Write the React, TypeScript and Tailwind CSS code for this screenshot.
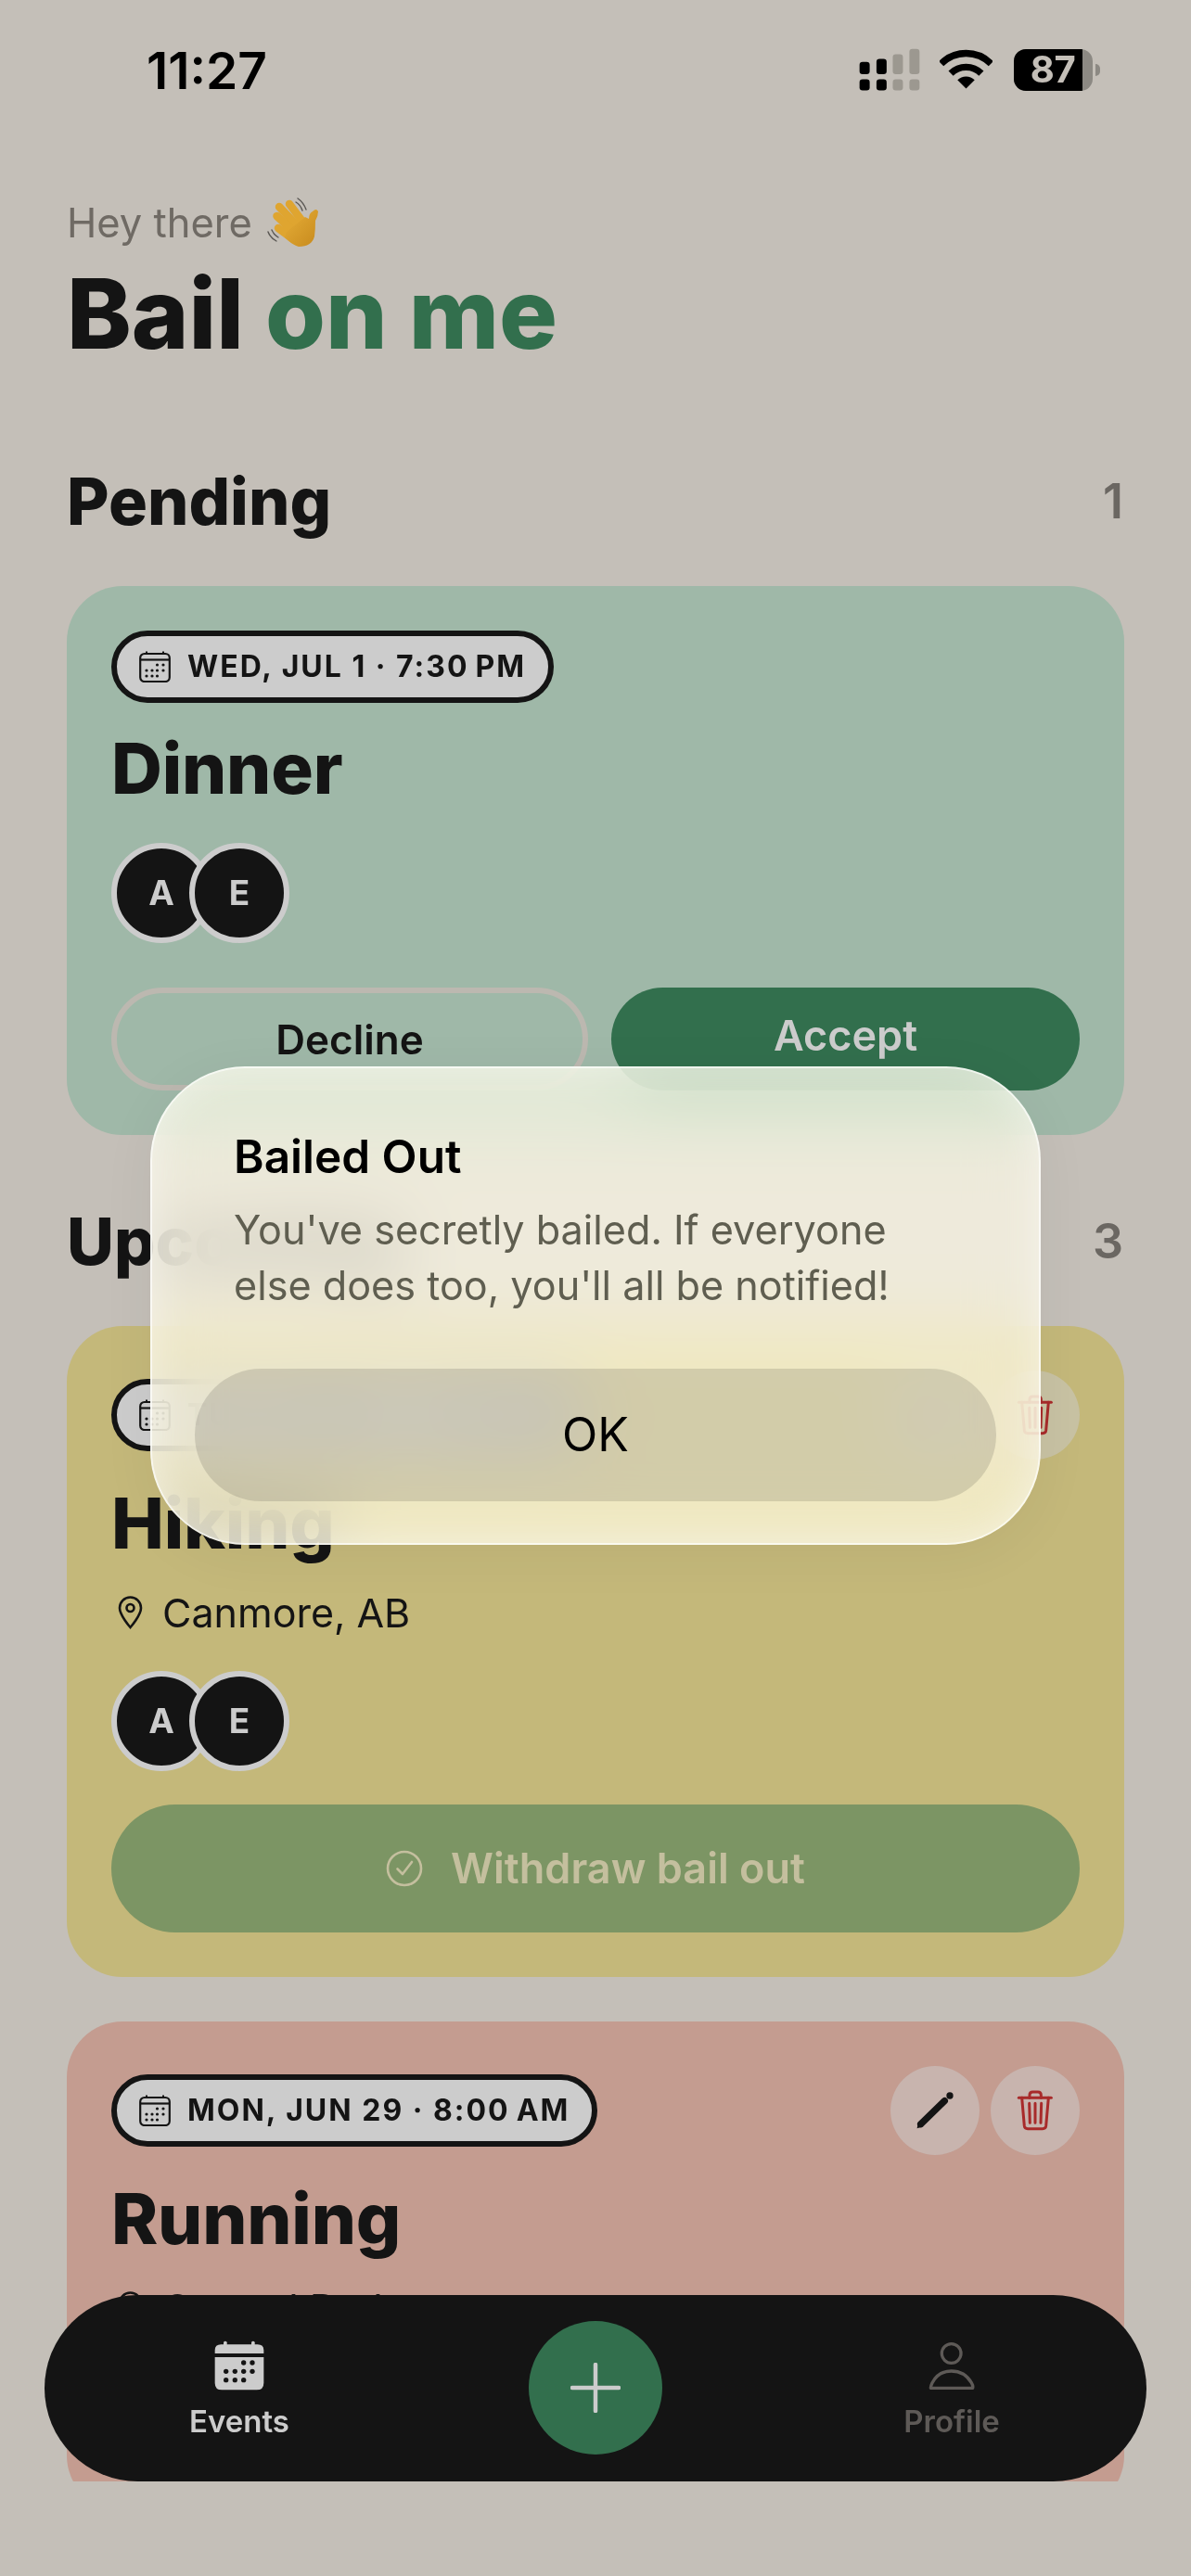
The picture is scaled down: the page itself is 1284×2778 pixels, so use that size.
import React from "react";

const Hand = () => (
  <svg width="90" height="80" viewBox="0 0 90 80" className="-my-[15px] -ml-[1px] shrink-0">
    <defs>
      <linearGradient id="h" x1="0" y1="0" x2="1" y2="1">
        <stop offset="0" stopColor="#e6ae38" />
        <stop offset="1" stopColor="#c78a1d" />
      </linearGradient>
    </defs>
    <g stroke="#dfa530" strokeWidth="8.5" strokeLinecap="round">
      <line x1="41" y1="20" x2="56" y2="40" />
      <line x1="30" y1="23" x2="50" y2="44" />
      <line x1="27.5" y1="33" x2="46" y2="50" />
      <line x1="29" y1="46" x2="45" y2="58" />
    </g>
    <path d="M38 50 L58 34 L62 36 Q62 30 66 28 Q70 24 72 28 Q72 33 69 38 Q69 48 68 55 Q65 66 51 66 Q44 64 36 56 Z" fill="url(#h)" />
    <g fill="none" stroke="#5a5753" strokeWidth="1.4" strokeLinecap="round">
      <path d="M50 14 Q56 18 59 26" />
      <path d="M48 18 Q53 21 55 27" />
      <path d="M18 50 Q20 56 27 60" />
      <path d="M22 48 Q24 53 29 56" />
    </g>
  </svg>
);

const Signal = () => (
  <svg width="68" height="50" viewBox="130 60 205 150">
    <g fill="#000">
      <rect x="135" y="110" width="33" height="40" rx="10" />
      <rect x="190" y="100" width="33" height="50" rx="10" />
      <rect x="135" y="167" width="33" height="36" rx="10" />
      <rect x="190" y="167" width="33" height="36" rx="10" />
    </g>
    <g fill="#9c9890">
      <rect x="243" y="85" width="33" height="65" rx="10" />
      <rect x="297" y="68" width="33" height="82" rx="10" />
      <rect x="243" y="167" width="33" height="36" rx="10" />
      <rect x="297" y="167" width="33" height="36" rx="10" />
    </g>
  </svg>
);

const Wifi = () => (
  <svg width="57" height="44" viewBox="398 70 172 132" fill="none">
    <path d="M403 117 A114 114 0 0 1 565 117" stroke="#000" strokeWidth="22" />
    <path d="M434.5 148.5 A70 70 0 0 1 533.5 148.5" stroke="#000" strokeWidth="22" />
    <path d="M484 198 L456 170 A40 40 0 0 1 512 170 Z" fill="#000" />
  </svg>
);

const SmallCal = () => (
  <svg width="34" height="34" viewBox="0 0 34 34" className="shrink-0" fill="none" stroke="#141414">
    <rect x="1.2" y="3" width="31.6" height="30" rx="4.5" strokeWidth="2.2" />
    <line x1="1.2" y1="9.5" x2="32.8" y2="9.5" strokeWidth="2.2" />
    <line x1="8" y1="0.5" x2="8" y2="3" strokeWidth="2" />
    <line x1="26" y1="0.5" x2="26" y2="3" strokeWidth="2" />
    <g fill="#141414" stroke="none">
      <circle cx="19.5" cy="15" r="1.6" />
      <circle cx="26" cy="15" r="1.6" />
      <circle cx="8" cy="21" r="1.6" />
      <circle cx="14" cy="21" r="1.6" />
      <circle cx="19.5" cy="21" r="1.6" />
      <circle cx="26" cy="21" r="1.6" />
      <circle cx="8" cy="27" r="1.6" />
      <circle cx="14" cy="27" r="1.6" />
      <circle cx="19.5" cy="27" r="1.6" />
    </g>
  </svg>
);

const Pill = ({ text }: { text: string }) => (
  <div className="flex h-[78px] items-center gap-[18px] rounded-full border-[6px] border-[#141414] bg-[#cccccc] pl-[24px] pr-[24px]">
    <SmallCal />
    <span className="text-[32px] font-bold leading-none tracking-[2px] whitespace-nowrap text-[#141414]">{text}</span>
  </div>
);

const Avatars = () => (
  <div className="flex">
    {["A", "E"].map((l, i) => (
      <div
        key={l}
        className={
          i === 0
            ? "flex h-[108px] w-[108px] items-center justify-center rounded-full border-[6px] border-[#cccccc] bg-[#141414] text-[37px] font-bold text-[#cccccc]"
            : "-ml-[24px] flex h-[108px] w-[108px] items-center justify-center rounded-full border-[6px] border-[#cccccc] bg-[#141414] text-[37px] font-bold text-[#cccccc]"
        }
      >
        {l}
      </div>
    ))}
  </div>
);

const Pin = () => (
  <svg width="27" height="36" viewBox="0 0 27 36" fill="none" stroke="#141414" strokeWidth="2.6" className="shrink-0">
    <path d="M13.5 34 C13.5 34 2 21 2 13 A11.5 11.5 0 0 1 25 13 C25 21 13.5 34 13.5 34Z" />
    <circle cx="13.5" cy="13" r="4" />
  </svg>
);

const Actions = () => (
  <div className="flex gap-[12px]">
    <div className="h-[96px] w-[96px] rounded-full bg-[#cccccc]/50">
      <svg width="96" height="96" viewBox="30 24 288 288">
        <path d="M128 212 L205 137" stroke="#141414" strokeWidth="22" strokeLinecap="round" />
        <path d="M116 226 L120 205 L136 220 Z" fill="#141414" />
        <circle cx="222" cy="120" r="11" fill="#141414" />
      </svg>
    </div>
    <div className="h-[96px] w-[96px] rounded-full bg-[#cccccc]/50">
      <svg width="96" height="96" viewBox="354 24 288 288" fill="none" stroke="#a82a2a" strokeWidth="9" strokeLinecap="round">
        <path d="M445 127 H550" />
        <path d="M480 127 V118 Q480 108 490 108 H507 Q517 108 517 118 V127" />
        <path d="M455 127 L463 218 Q464 227 474 227 H522 Q532 227 533 218 L541 127" />
        <path d="M479 145 L481 208 M498 145 V208 M518 145 L516 208" />
      </svg>
    </div>
  </div>
);

const Section = ({ title, count }: { title: string; count: string }) => (
  <div className="flex h-[80px] items-center justify-between">
    <h2 className="text-[70px] font-extrabold leading-[80px] text-[#141414]">{title}</h2>
    <span className="pr-[1px] text-[52px] font-semibold text-[#6b6762]">{count}</span>
  </div>
);

const Title = ({ children }: { children: string }) => (
  <h3 className="h-[90px] text-[76px] font-extrabold leading-[90px] tracking-[-0.2px] text-[#141414]">{children}</h3>
);

const Location = ({ children }: { children: string }) => (
  <div className="mt-[22px] flex h-[60px] items-center gap-[21px] pl-[7px] text-[43px] leading-[60px] text-[#141414]">
    <Pin />
    <span>{children}</span>
  </div>
);

export default function App() {
  return (
    <div className="relative h-[2778px] w-[1284px] overflow-hidden bg-[#c4bfb8] font-[family-name:Inter,sans-serif]">
      <div className="h-[2676px] overflow-hidden">
        {/* status bar */}
        <div className="flex h-[150px] items-center justify-between pl-[158px] pr-[98px]">
          <span className="pt-[3px] text-[55px] font-semibold leading-none text-black">11:27</span>
          <div className="flex items-center">
            <Signal />
            <div className="ml-[20px]">
              <Wifi />
            </div>
            <div className="ml-[23px] flex items-center">
              <div className="flex h-[45px] w-[85px] overflow-hidden rounded-[13px] bg-[#8c8983]">
                <div className="flex h-full w-[74px] items-center justify-center bg-black pl-[10px] text-[40px] font-bold leading-none tracking-[-0.5px] text-[#c4bfb8]">
                  87
                </div>
              </div>
              <div className="ml-[3px] h-[13px] w-[5px] rounded-r-full bg-[#8c8983]" />
            </div>
          </div>
        </div>

        <div className="px-[72px] pt-[65px]">
          <div className="flex h-[50px] items-center text-[43.5px] leading-[50px] text-[#6f6a64]">
            <span>Hey there</span>
            <Hand />
          </div>
          <h1 className="mt-[18px] h-[110px] text-[105px] font-extrabold leading-[110px] text-[#141414]">
            Bail <span className="text-[#326f4d]">on me</span>
          </h1>

          <div className="mt-[108px]">
            <Section title="Pending" count="1" />
          </div>

          <div className="mt-[51px] rounded-[60px] bg-[#9fb8a8] p-[48px]">
            <div className="flex">
              <Pill text={"WED, JUL 1 · 7:30\u2009PM"} />
            </div>
            <div className="mt-[25px]">
              <Title>Dinner</Title>
            </div>
            <div className="mt-[36px]">
              <Avatars />
            </div>
            <div className="mt-[48px] flex gap-[25px]">
              <div className="flex h-[111px] w-[514px] items-center justify-center rounded-full border-[6px] border-[#bcb8b0] text-[44px] font-semibold text-[#141414]">
                Decline
              </div>
              <div className="flex h-[111px] flex-1 items-center justify-center rounded-full bg-[#326f4d] pb-[8px] text-[45px] font-semibold text-[#cccccc]">
                Accept
              </div>
            </div>
          </div>

          <div className="mt-[75px]">
            <Section title="Upcoming" count="3" />
          </div>

          <div className="mt-[51px] rounded-[60px] bg-[#c4b87a] p-[48px]">
            <div className="flex items-center justify-between">
              <Pill text={"TUE, JUN 30 · 9:00\u2009AM"} />
              <Actions />
            </div>
            <div className="mt-[23px]">
              <Title>Hiking</Title>
            </div>
            <Location>Canmore, AB</Location>
            <div className="mt-[33px]">
              <Avatars />
            </div>
            <div className="mt-[36px] flex h-[138px] items-center justify-center gap-[30px] rounded-full bg-[#7c9564] text-[45px] font-semibold text-[#c4bf9e]">
              <svg width="40" height="40" viewBox="0 0 40 40" fill="none" stroke="#c4bf9e" strokeWidth="2.6" strokeLinecap="round" strokeLinejoin="round">
                <circle cx="20" cy="20" r="18" />
                <path d="M12.5 20.5 L18 26 L28 13" />
              </svg>
              <span>Withdraw bail out</span>
            </div>
          </div>

          <div className="mt-[48px] rounded-[60px] bg-[#c49c90] p-[48px]">
            <div className="flex items-center justify-between">
              <Pill text={"MON, JUN 29 · 8:00\u2009AM"} />
              <Actions />
            </div>
            <div className="mt-[23px]">
              <Title>Running</Title>
            </div>
            <Location>Central Park</Location>
            <div className="mt-[33px]">
              <Avatars />
            </div>
          </div>
        </div>
      </div>

      {/* tab bar */}
      <div className="absolute left-[48px] top-[2475px] grid h-[201px] w-[1188px] grid-cols-3 rounded-full bg-[#141414] px-[18px]">
        <div className="flex flex-col items-center pt-[48px]">
          <svg width="57" height="57" viewBox="120 40 171 171">
            <g fill="#cccccc">
              <rect x="153" y="45" width="11" height="16" rx="5" />
              <rect x="243" y="45" width="11" height="16" rx="5" />
              <path d="M125 85 V75 Q125 56 145 56 H263 Q283 56 283 75 V85 Z" />
              <path d="M125 97 H283 V180 Q283 203 260 203 H148 Q125 203 125 180 Z" />
            </g>
            <g fill="#141414">
              <circle cx="218" cy="115" r="8" />
              <circle cx="246" cy="115" r="8" />
              <circle cx="161" cy="143" r="8" />
              <circle cx="190" cy="143" r="8" />
              <circle cx="218" cy="143" r="8" />
              <circle cx="246" cy="143" r="8" />
              <circle cx="161" cy="171" r="8" />
              <circle cx="190" cy="171" r="8" />
              <circle cx="218" cy="171" r="8" />
            </g>
          </svg>
          <span className="mt-[11px] text-[33px] font-semibold leading-[40px] text-[#cccccc]">Events</span>
        </div>
        <div className="flex items-center justify-center pb-[2px]">
          <div className="flex h-[144px] w-[144px] items-center justify-center rounded-full bg-[#326f4d]">
            <svg width="54" height="54" viewBox="0 0 54 54" stroke="#cccccc" strokeWidth="4.5" strokeLinecap="round">
              <path d="M27 2 V52 M2 27 H52" />
            </svg>
          </div>
        </div>
        <div className="flex flex-col items-center pt-[48px]">
          <svg width="54" height="57" viewBox="117 40 162 171" fill="none" stroke="#5e5a57" strokeWidth="10" strokeLinejoin="round">
            <circle cx="197" cy="85" r="31" />
            <path d="M130 197 Q130 190 135 180 Q155 142 197 142 Q240 142 262 180 Q268 190 266 197 Z" />
          </svg>
          <span className="mt-[11px] text-[33px] font-semibold leading-[40px] text-[#5e5a57]">Profile</span>
        </div>
      </div>

      {/* alert */}
      <div className="absolute left-[162px] top-[1150px] flex h-[516px] w-[960px] flex-col rounded-[102px] border-[2px] border-white/70 bg-[rgba(255,252,235,0.7)] px-[46px] pb-[45px] pt-[65px] shadow-[inset_0_0_40px_rgba(255,255,255,0.4),0_10px_60px_rgba(0,0,0,0.05)] backdrop-blur-[36px] backdrop-saturate-[1.5]">
        <div className="px-[42px]">
          <div className="text-[49.5px] font-semibold leading-[60px] text-black">Bailed Out</div>
          <div className="mt-[19px] text-[43.2px] leading-[60px] text-[#5f5e50]">
            You've secretly bailed. If everyone
            <br />
            else does too, you'll all be notified!
          </div>
        </div>
        <div className="mt-auto flex h-[143px] items-center justify-center rounded-full bg-black/12 text-[50px] text-black">
          OK
        </div>
      </div>
    </div>
  );
}
